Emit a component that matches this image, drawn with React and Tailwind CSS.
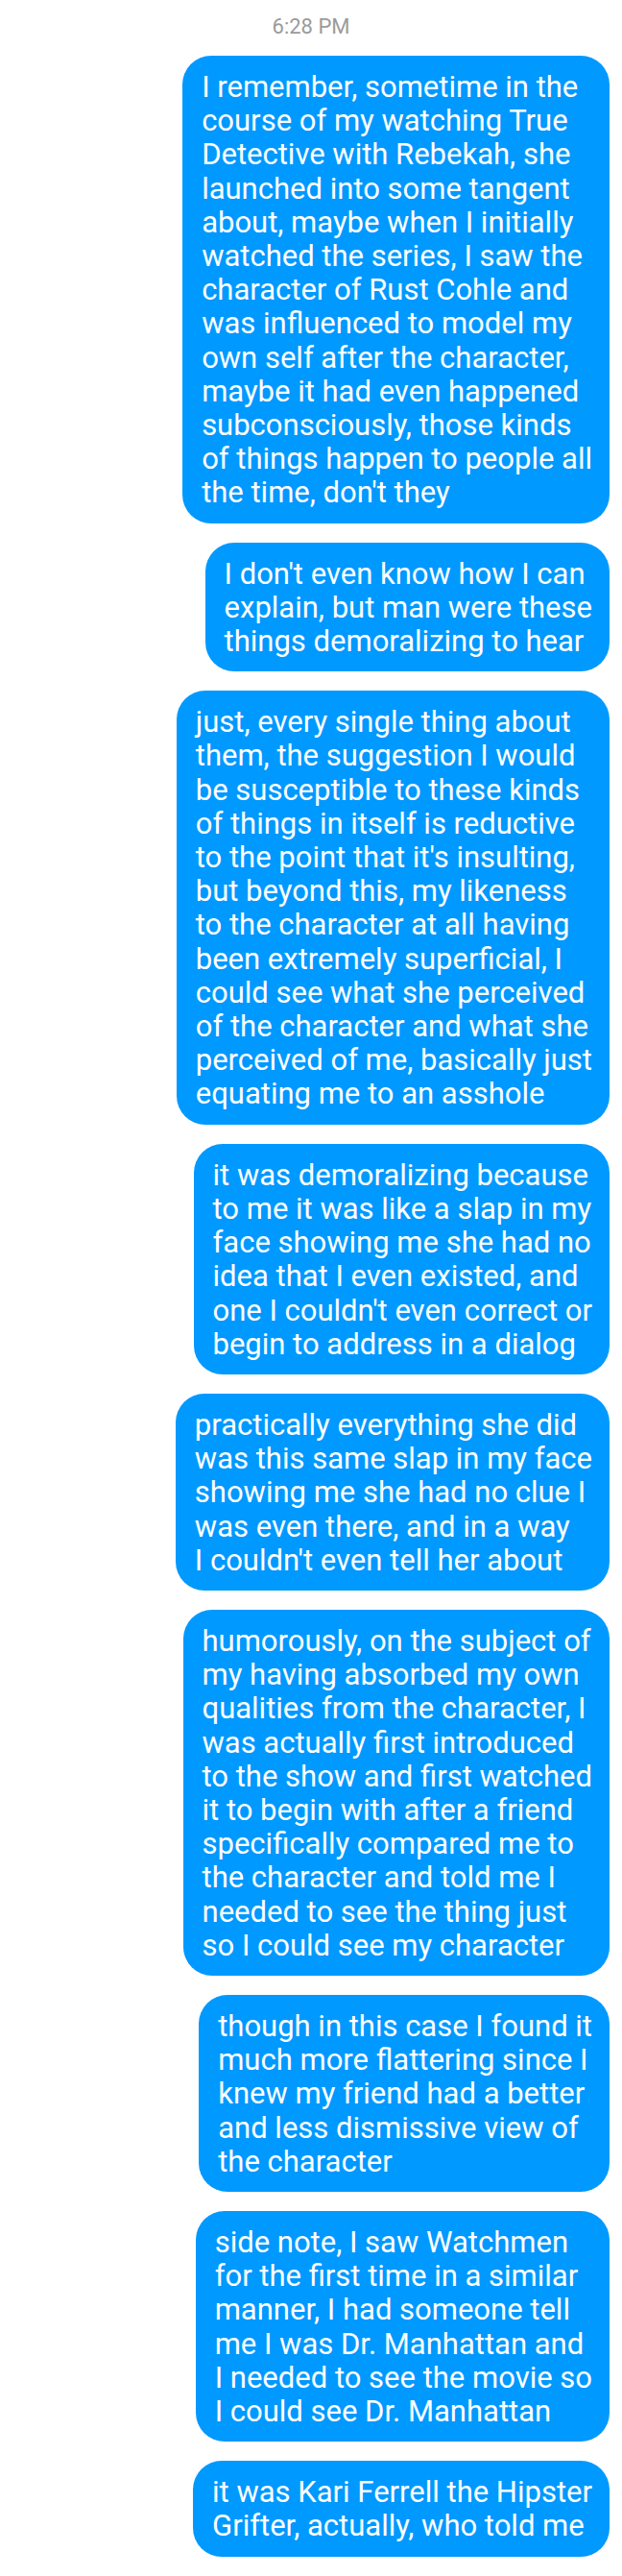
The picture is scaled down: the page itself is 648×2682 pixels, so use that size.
import React from "react";

const messages = [
  [
    "I remember, sometime in the",
    "course of my watching True",
    "Detective with Rebekah, she",
    "launched into some tangent",
    "about, maybe when I initially",
    "watched the series, I saw the",
    "character of Rust Cohle and",
    "was influenced to model my",
    "own self after the character,",
    "maybe it had even happened",
    "subconsciously, those kinds",
    "of things happen to people all",
    "the time, don't they",
  ],
  [
    "I don't even know how I can",
    "explain, but man were these",
    "things demoralizing to hear",
  ],
  [
    "just, every single thing about",
    "them, the suggestion I would",
    "be susceptible to these kinds",
    "of things in itself is reductive",
    "to the point that it's insulting,",
    "but beyond this, my likeness",
    "to the character at all having",
    "been extremely superficial, I",
    "could see what she perceived",
    "of the character and what she",
    "perceived of me, basically just",
    "equating me to an asshole",
  ],
  [
    "it was demoralizing because",
    "to me it was like a slap in my",
    "face showing me she had no",
    "idea that I even existed, and",
    "one I couldn't even correct or",
    "begin to address in a dialog",
  ],
  [
    "practically everything she did",
    "was this same slap in my face",
    "showing me she had no clue I",
    "was even there, and in a way",
    "I couldn't even tell her about",
  ],
  [
    "humorously, on the subject of",
    "my having absorbed my own",
    "qualities from the character, I",
    "was actually first introduced",
    "to the show and first watched",
    "it to begin with after a friend",
    "specifically compared me to",
    "the character and told me I",
    "needed to see the thing just",
    "so I could see my character",
  ],
  [
    "though in this case I found it",
    "much more flattering since I",
    "knew my friend had a better",
    "and less dismissive view of",
    "the character",
  ],
  [
    "side note, I saw Watchmen",
    "for the first time in a similar",
    "manner, I had someone tell",
    "me I was Dr. Manhattan and",
    "I needed to see the movie so",
    "I could see Dr. Manhattan",
  ],
  [
    "it was Kari Ferrell the Hipster",
    "Grifter, actually, who told me",
  ],
];

export default function App() {
  return (
    <div
      className="w-[648px] min-h-[2682px] bg-white"
      style={{ fontFamily: "Roboto, 'Noto Sans', sans-serif" }}
    >
      <div className="pt-[15px] text-center text-[22px] leading-[26px] text-[#9b9b9b]">
        6:28 PM
      </div>
      <div className="mt-[17px] flex flex-col items-end gap-[20px] pr-[13px]">
        {messages.map((lines, i) => (
          <div
            key={i}
            className="rounded-[30px] bg-[#0099ff] pl-[20px] pr-[18px] pt-[15px] pb-[14px] text-[31px] leading-[35.2px] text-white whitespace-nowrap"
          >
            {lines.map((l, j) => (
              <div key={j}>{l}</div>
            ))}
          </div>
        ))}
      </div>
    </div>
  );
}
